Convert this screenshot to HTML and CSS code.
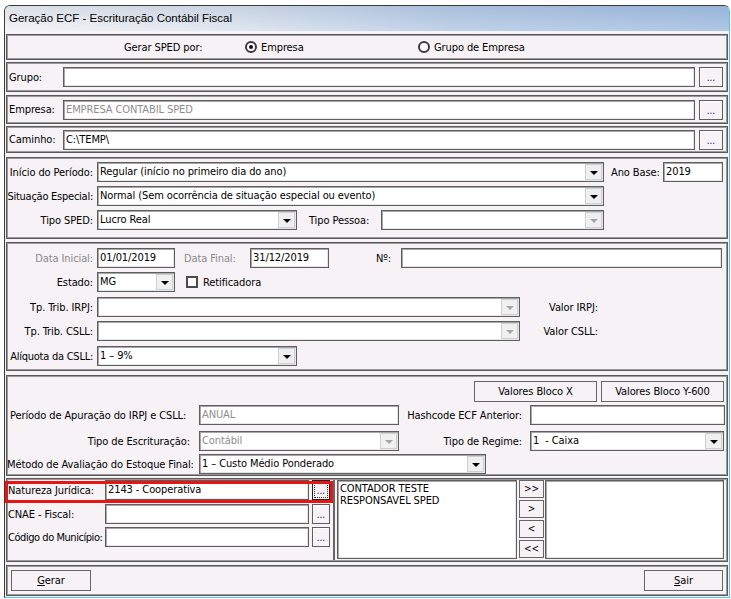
FILE: index.html
```html
<!DOCTYPE html>
<html>
<head>
<meta charset="utf-8">
<title>Geração ECF</title>
<link rel="stylesheet" href="styles.css">
</head>
<body>
<div class="window">
  <div class="titlebar">Geração ECF - Escrituração Contábil Fiscal</div>
  <div class="client">

    <div class="panel p1 hrow">
      <span class="sped-lbl">Gerar SPED por:</span>
      <span class="radio r-emp"><span class="rb on"></span>Empresa</span>
      <span class="radio"><span class="rb"></span>Grupo de Empresa</span>
    </div>

    <div class="panel p2 hrow pathrow">
      <span class="plbl">Grupo:</span>
      <div class="edit w632"></div>
      <div class="dots">...</div>
    </div>

    <div class="panel p3 hrow pathrow">
      <span class="plbl">Empresa:</span>
      <div class="edit w632 dim">EMPRESA CONTABIL SPED</div>
      <div class="dots">...</div>
    </div>

    <div class="panel p4 hrow pathrow">
      <span class="plbl">Caminho:</span>
      <div class="edit w632">C:\TEMP\</div>
      <div class="dots">...</div>
    </div>

    <div class="panel p5 stack">
      <div class="frow">
        <span class="lbl l89">Início do Período:</span>
        <div class="combo w507"><span class="val">Regular (início no primeiro dia do ano)</span><span class="arr"></span></div>
        <span class="flbl ano">Ano Base:</span>
        <div class="edit w60">2019</div>
      </div>
      <div class="frow">
        <span class="lbl l89 tight">Situação Especial:</span>
        <div class="combo w507"><span class="val">Normal (Sem ocorrência de situação especial ou evento)</span><span class="arr"></span></div>
      </div>
      <div class="frow">
        <span class="lbl l89">Tipo SPED:</span>
        <div class="combo w200"><span class="val">Lucro Real</span><span class="arr"></span></div>
        <span class="flbl tpessoa">Tipo Pessoa:</span>
        <div class="combo w223 disabled"><span class="val"></span><span class="arr"></span></div>
      </div>
    </div>

    <div class="panel p6 stack">
      <div class="frow">
        <span class="lbl l89 gray">Data Inicial:</span>
        <div class="edit w78">01/01/2019</div>
        <span class="flbl gray dfinal">Data Final:</span>
        <div class="edit w79">31/12/2019</div>
        <span class="flbl numlbl">Nº:</span>
        <div class="edit w321"></div>
      </div>
      <div class="frow">
        <span class="lbl l89">Estado:</span>
        <div class="combo w78"><span class="val">MG</span><span class="arr"></span></div>
        <span class="check"></span>
        <span class="checklbl">Retificadora</span>
      </div>
      <div class="frow extra">
        <span class="lbl l89">Tp. Trib. IRPJ:</span>
        <div class="combo w423 disabled"><span class="val"></span><span class="arr"></span></div>
        <span class="lbl valor">Valor IRPJ:</span>
      </div>
      <div class="frow">
        <span class="lbl l89">Tp. Trib. CSLL:</span>
        <div class="combo w423 disabled"><span class="val"></span><span class="arr"></span></div>
        <span class="lbl valor">Valor CSLL:</span>
      </div>
      <div class="frow extra">
        <span class="lbl l89 tight">Alíquota da CSLL:</span>
        <div class="combo w200"><span class="val">1 – 9%</span><span class="arr"></span></div>
      </div>
    </div>

    <div class="panel p7 stack7">
      <div class="btnrow">
        <div class="btn w123">Valores Bloco X</div>
        <div class="btn w123">Valores Bloco Y-600</div>
      </div>
      <div class="frow r2">
        <span class="llbl">Período de Apuração do IRPJ e CSLL:</span>
        <div class="edit w200 dim">ANUAL</div>
        <span class="lbl rlbl">Hashcode ECF Anterior:</span>
        <div class="edit w195"></div>
      </div>
      <div class="frow r3">
        <span class="lbl l191">Tipo de Escrituração:</span>
        <div class="combo w200 disabled"><span class="val dimtxt">Contábil</span><span class="arr"></span></div>
        <span class="lbl rlbl">Tipo de Regime:</span>
        <div class="combo w194"><span class="val">1&nbsp; - Caixa</span><span class="arr"></span></div>
      </div>
      <div class="frow r4">
        <span class="llbl metodo">Método de Avaliação do Estoque Final:</span>
        <div class="combo w287"><span class="val">1 – Custo Médio Ponderado</span><span class="arr"></span></div>
      </div>
    </div>

    <div class="panel p8 split">
      <div class="leftsec">
        <div class="frow">
          <span class="nlbl">Natureza Jurídica:</span>
          <div class="edit w204">2143 - Cooperativa</div>
          <div class="dots sm focus"><span>...</span></div>
        </div>
        <div class="frow lr2">
          <span class="nlbl">CNAE - Fiscal:</span>
          <div class="edit w204"></div>
          <div class="dots sm">...</div>
        </div>
        <div class="frow lr3">
          <span class="nlbl tighter">Código do Município:</span>
          <div class="edit w204"></div>
          <div class="dots sm">...</div>
        </div>
      </div>
      <div class="rightsec">
        <div class="listbox w180">
          <div class="item">CONTADOR TESTE</div>
          <div class="item">RESPONSAVEL SPED</div>
        </div>
        <div class="movebtns">
          <div class="mbtn">&gt;&gt;</div>
          <div class="mbtn">&gt;</div>
          <div class="mbtn">&lt;</div>
          <div class="mbtn">&lt;&lt;</div>
        </div>
        <div class="listbox w179"></div>
      </div>
      <div class="redbox"></div>
    </div>

    <div class="panel p9 footer">
      <div class="btn w80"><u>G</u>erar</div>
      <div class="btn w79"><u>S</u>air</div>
    </div>

  </div>
</div>
</body>
</html>
```

FILE: styles.css
```css
* { box-sizing: border-box; }
html, body { margin: 0; padding: 0; background: #ffffff; }
body {
  font-family: "DejaVu Sans Condensed", "Liberation Sans", sans-serif;
  font-size: 11px;
  letter-spacing: -0.1px;
  color: #000;
}

.window {
  margin: 5px 0 0 4px;
  width: 726px;
  height: 593px;
  border: 1px solid #3a3a3a;
  border-right-color: #56c4ec;
  border-bottom-color: #56c4ec;
  border-radius: 6px 6px 0 0;
  background: #f6f2f6;
  overflow: hidden;
}

.titlebar {
  height: 25px;
  line-height: 25px;
  padding-left: 4px;
  font-family: "Liberation Sans", sans-serif;
  font-size: 11.5px;
  letter-spacing: 0;
  color: #000;
  background:
    linear-gradient(to bottom, rgba(70, 100, 150, 0.14), rgba(255, 255, 255, 0.10)),
    linear-gradient(to right, #f4f4f6 0%, #dfe6ef 30%, #b9cde6 62%, #a6c1e3 100%);
}

.client { padding: 3px 1px 0 1px; }

.panel {
  width: 722px;
  border: 1px solid #5a5a5a;
  padding: 1px;
  box-shadow: inset 0 0 0 1px #9a9a9a;
  background: #f6f2f6;
}

.p1 { height: 26px; margin-bottom: 2px; }
.p2 { height: 30px; margin-bottom: 3px; }
.p3 { height: 29px; margin-bottom: 2px; }
.p4 { height: 27px; margin-bottom: 4px; }
.p5 { height: 82px; margin-bottom: 3px; }
.p6 { height: 129px; margin-bottom: 4px; }
.p7 { height: 101px; margin-bottom: 2px; }
.p8 { height: 84px; margin-bottom: 3px; }
.p9 { height: 31px; }

.hrow { display: flex; align-items: center; }

/* panel 1 */
.sped-lbl { margin-left: 116px; width: 121px; flex: none; }
.radio { display: flex; align-items: center; gap: 4px; flex: none; }
.r-emp { width: 173px; }
.rb {
  width: 12px; height: 12px;
  border: 2px solid #3c3c3c;
  border-radius: 50%;
  background: #fff;
  display: flex; align-items: center; justify-content: center;
}
.rb.on::after {
  content: "";
  width: 4px; height: 4px;
  border-radius: 50%;
  background: #111;
}

/* path rows */
.pathrow { padding-left: 2px; }
.plbl { width: 54px; flex: none; }
.pathrow .dots { margin-left: 4px; }

/* generic fields */
.edit, .combo, .listbox {
  flex: none;
  height: 20px;
  background: #fff;
  border: 1px solid #5e5e5e;
  box-shadow: inset 1px 1px 0 #a8a8a8, inset -1px -1px 0 #e6e6e6;
  white-space: nowrap;
  overflow: hidden;
}
.edit { padding: 0 2px; line-height: 18px; }
.dim { color: #8d8d8d; }
.combo { display: flex; align-items: stretch; padding: 1px; }
.combo .val { flex: 1; padding-left: 1px; line-height: 16px; overflow: hidden; }
.combo .arr {
  flex: none;
  width: 17px;
  background: #f0f0f0;
  border: 1px solid #cfcfcf;
  display: flex; align-items: center; justify-content: center;
}
.combo .arr::after {
  content: "";
  width: 0; height: 0;
  border-left: 4px solid transparent;
  border-right: 4px solid transparent;
  border-top: 4px solid #000;
  margin-top: 1px;
}
.combo.disabled .arr::after { border-top-color: #a6a6a6; }
.dimtxt { color: #8d8d8d; }

.dots {
  flex: none;
  width: 24px; height: 20px;
  border: 1px solid #5e5e5e;
  box-shadow: inset 1px 1px 0 #ffffff;
  background: #f6f2f6;
  color: #1a1a6a;
  font-size: 10px;
  text-align: center;
  line-height: 20px;
}
.dots.sm { width: 18px; }
.dots.focus { border-color: #222; }
.dots.focus span {
  display: block;
  margin: 2px;
  height: 14px;
  line-height: 16px;
  outline: 1px dotted #333;
}

/* widths */
.w60 { width: 60px; }
.w78 { width: 78px; }
.w79 { width: 79px; }
.w80 { width: 80px; }
.w123 { width: 123px; }
.w179 { width: 179px; }
.w180 { width: 180px; }
.w194 { width: 194px; }
.w195 { width: 195px; }
.w200 { width: 200px; }
.w204 { width: 204px; }
.w223 { width: 223px; }
.w287 { width: 287px; }
.w321 { width: 321px; }
.w423 { width: 423px; }
.w507 { width: 507px; }
.w632 { width: 632px; }

/* form rows */
.stack { display: flex; flex-direction: column; gap: 4px; }
.p5 { padding-top: 4px; }
.p6 { padding-top: 5px; }
.frow { display: flex; align-items: center; height: 20px; flex: none; }
.frow.extra { margin-top: 1px; }

.lbl {
  flex: none;
  display: flex;
  justify-content: flex-end;
  white-space: nowrap;
  padding-right: 4px;
}
.tight { letter-spacing: -0.25px; }
.tighter { letter-spacing: -0.45px; }
.l89 { width: 89px; }
.gray { color: #8a8a8a; }
.flbl { flex: none; white-space: nowrap; }
.ano { margin-left: 7px; width: 52px; }
.tpessoa { margin-left: 12px; width: 72px; }
.dfinal { margin-left: 9px; width: 66px; }
.numlbl { margin-left: 47px; width: 25px; }
.check {
  flex: none;
  margin-left: 11px;
  width: 12px; height: 12px;
  border: 2px solid #4a4a4a;
  background: #fff;
}
.checklbl { margin-left: 5px; }
.valor { width: 81px; padding-right: 3px; }

/* panel 7 */
.stack7 { display: flex; flex-direction: column; padding-top: 5px; }
.btnrow { display: flex; justify-content: flex-end; gap: 4px; padding-right: 2px; height: 21px; }
.btn {
  flex: none;
  height: 21px;
  border: 1px solid #666;
  background: #f6f2f6;
  text-align: center;
  line-height: 19px;
}
.r2 { margin-top: 3px; }
.r3 { margin-top: 6px; }
.r4 { margin-top: 3px; }
.llbl { flex: none; width: 191px; padding-left: 2px; white-space: nowrap; overflow: visible; }
.metodo { padding-left: 0; margin-left: -1px; width: 192px; }
.l191 { width: 191px; padding-right: 9px; }
.rlbl { width: 131px; padding-right: 8px; }

/* panel 8 */
.split { display: flex; position: relative; padding-top: 1px; }
.leftsec {
  flex: none;
  width: 327px;
  height: 100%;
  border-right: 2px solid #666;
  display: flex; flex-direction: column;
}
.lr2 { margin-top: 4px; }
.lr3 { margin-top: 3px; }
.nlbl { flex: none; width: 97px; white-space: nowrap; }
.leftsec .dots { margin-left: 3px; }
.rightsec { display: flex; padding-left: 2px; }
.listbox { height: 79px; padding: 2px 2px; line-height: 12px; }
.item { white-space: nowrap; }
.movebtns { display: flex; flex-direction: column; gap: 2px; margin-left: 2px; margin-right: 1px; }
.mbtn {
  width: 25px; height: 18px;
  border: 1px solid #666;
  background: #f6f2f6;
  text-align: center;
  line-height: 16px;
  font-size: 10px;
}
.redbox {
  position: absolute;
  left: -2px;
  top: 2px;
  width: 328px;
  height: 22px;
  border: 3px solid #e81515;
}

/* footer */
.footer { display: flex; justify-content: space-between; padding: 4px 4px 0 4px; }
```
